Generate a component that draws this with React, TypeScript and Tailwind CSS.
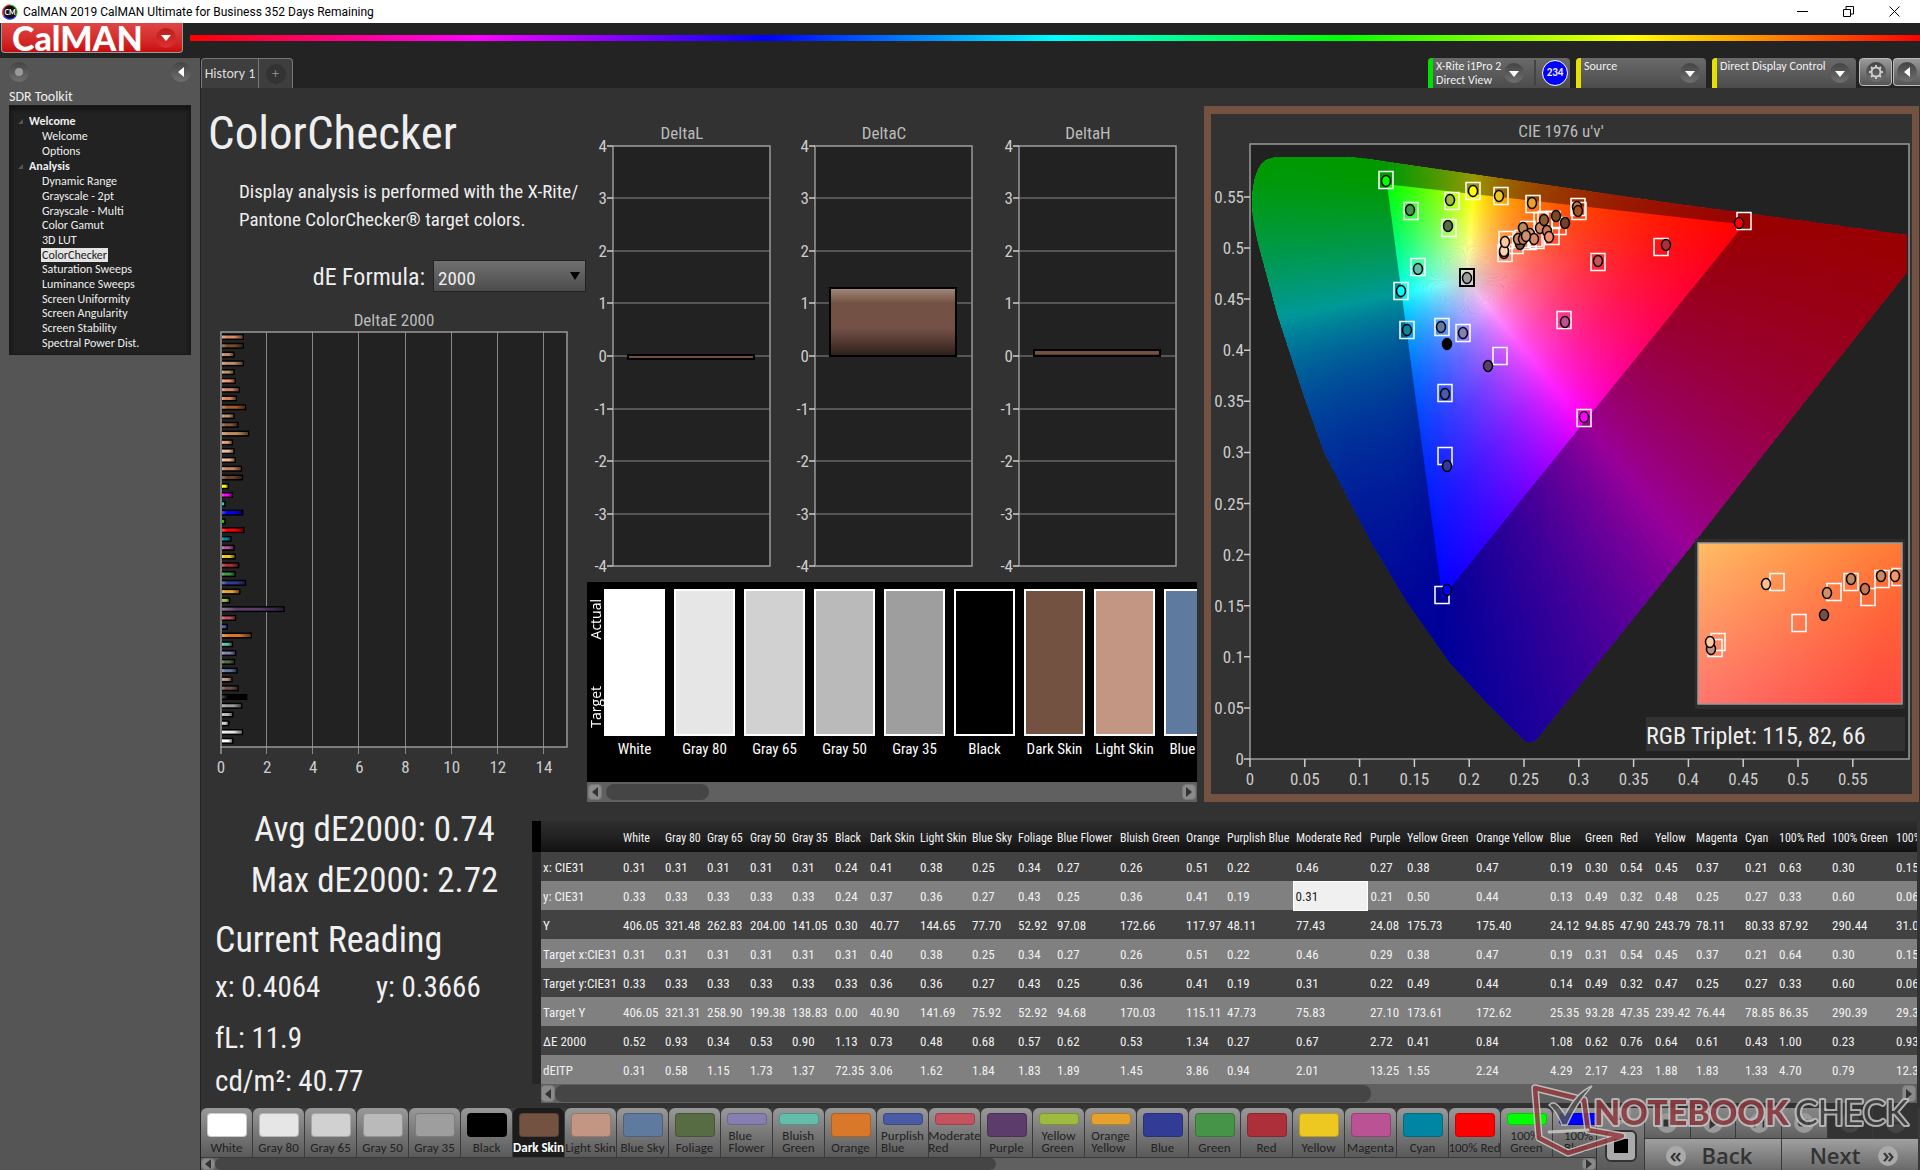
import type { ReactNode } from "react";

const COND = "font-['Roboto_Condensed','Roboto',sans-serif]";
const HUMAN = "font-['Carlito','Lato',sans-serif]";

const menu = [
  { title: "Welcome", items: ["Welcome", "Options"] },
  {
    title: "Analysis",
    items: [
      "Dynamic Range", "Grayscale - 2pt", "Grayscale - Multi", "Color Gamut", "3D LUT", "ColorChecker",
      "Saturation Sweeps", "Luminance Sweeps", "Screen Uniformity", "Screen Angularity", "Screen Stability", "Spectral Power Dist.",
    ],
  },
];

const patches: [string, string][] = [
  ["White", "#ffffff"], ["Gray 80", "#e6e6e6"], ["Gray 65", "#d1d1d1"], ["Gray 50", "#bababa"], ["Gray 35", "#9e9e9e"],
  ["Black", "#000000"], ["Dark Skin", "#735242"], ["Light Skin", "#c29682"], ["Blue Sky", "#5e7a9e"], ["Foliage", "#576c43"],
  ["Blue Flower", "#8580b1"], ["Bluish Green", "#64bdaa"], ["Orange", "#d97829"], ["Purplish Blue", "#4a5ba6"],
  ["Moderate Red", "#c2535f"], ["Purple", "#5c3c6b"], ["Yellow Green", "#9ebb40"], ["Orange Yellow", "#e6a12d"],
  ["Blue", "#323c96"], ["Green", "#469447"], ["Red", "#ad2f39"], ["Yellow", "#edc820"], ["Magenta", "#ba5293"],
  ["Cyan", "#0085a3"], ["100% Red", "#ff0000"], ["100% Green", "#00ff00"], ["100% Blue", "#0000ff"],
];

// one per patch column of the results table
const colWidths = [42, 42, 43, 42, 43, 35, 50, 52, 46, 39, 63, 66, 41, 69, 74, 37, 69, 74, 35, 35, 35, 41, 49, 34, 53, 64, 60];

const rows: [string, string][] = [
  ["x: CIE31", "0.31 0.31 0.31 0.31 0.31 0.24 0.41 0.38 0.25 0.34 0.27 0.26 0.51 0.22 0.46 0.27 0.38 0.47 0.19 0.30 0.54 0.45 0.37 0.21 0.63 0.30 0.15"],
  ["y: CIE31", "0.33 0.33 0.33 0.33 0.33 0.24 0.37 0.36 0.27 0.43 0.25 0.36 0.41 0.19 0.31 0.21 0.50 0.44 0.13 0.49 0.32 0.48 0.25 0.27 0.33 0.60 0.06"],
  ["Y", "406.05 321.48 262.83 204.00 141.05 0.30 40.77 144.65 77.70 52.92 97.08 172.66 117.97 48.11 77.43 24.08 175.73 175.40 24.12 94.85 47.90 243.79 78.11 80.33 87.92 290.44 31.04"],
  ["Target x:CIE31", "0.31 0.31 0.31 0.31 0.31 0.31 0.40 0.38 0.25 0.34 0.27 0.26 0.51 0.22 0.46 0.29 0.38 0.47 0.19 0.31 0.54 0.45 0.37 0.21 0.64 0.30 0.15"],
  ["Target y:CIE31", "0.33 0.33 0.33 0.33 0.33 0.33 0.36 0.36 0.27 0.43 0.25 0.36 0.41 0.19 0.31 0.22 0.49 0.44 0.14 0.49 0.32 0.47 0.25 0.27 0.33 0.60 0.06"],
  ["Target Y", "406.05 321.31 258.90 199.38 138.83 0.00 40.90 141.69 75.92 52.92 94.68 170.03 115.11 47.73 75.83 27.10 173.61 172.62 25.35 93.28 47.35 239.42 76.44 78.85 86.35 290.39 29.31"],
  ["ΔE 2000", "0.52 0.93 0.34 0.53 0.90 1.13 0.73 0.48 0.68 0.57 0.62 0.53 1.34 0.27 0.67 2.72 0.41 0.84 1.08 0.62 0.76 0.64 0.61 0.43 1.00 0.23 0.93"],
  ["dEITP", "0.31 0.58 1.15 1.73 1.37 72.35 3.06 1.62 1.84 1.83 1.89 1.45 3.86 0.94 2.01 13.25 1.55 2.24 4.29 2.17 4.23 1.88 1.83 1.33 4.70 0.79 12.31"],
];

// top to bottom: dE value, colour
const deBars: [number, string][] = [
  [0.95, "#d98c62"], [0.95, "#7c4a28"], [0.55, "#c48b68"], [0.95, "#c48b6d"], [0.55, "#c09068"], [0.6, "#f5966c"],
  [0.78, "#cf8763"], [0.65, "#dc8457"], [1.05, "#a85a28"], [0.55, "#c79070"], [0.72, "#8b5a38"], [1.18, "#c08a5c"],
  [0.48, "#e89a72"], [0.55, "#f0b898"], [0.6, "#f2ba90"], [0.87, "#cc8464"], [0.92, "#6c3f28"], [0.3, "#ffff00"],
  [0.48, "#ff00ff"], [0.16, "#20e0e0"], [0.93, "#0000ff"], [0.16, "#10e010"], [0.98, "#ff0000"], [0.42, "#0085a3"],
  [0.55, "#ba5293"], [0.6, "#edc820"], [0.75, "#ad2f39"], [0.6, "#469447"], [1.05, "#323c96"], [0.8, "#e6a12d"],
  [0.36, "#9ebb40"], [2.72, "#5c3c6b"], [0.62, "#c2535f"], [0.26, "#4a5ba6"], [1.3, "#d97829"], [0.48, "#64bdaa"],
  [0.62, "#8580b1"], [0.57, "#576c43"], [0.68, "#5e7a9e"], [0.46, "#c29682"], [0.73, "#735242"], [1.1, "#000000"],
  [0.88, "#9e9e9e"], [0.5, "#bababa"], [0.32, "#d1d1d1"], [0.92, "#e6e6e6"], [0.5, "#ffffff"],
];

// ---- CIE u'v' chart geometry, in plot pixels ----
const PW = 659;
const PH = 615;
const toX = (u: number) => u * 1096;
const toY = (v: number) => PH - v * 1022;
const WHITE = { u: 0.1978, v: 0.4683 };
const TRI = [[0.1250, 0.5625], [0.4507, 0.5229], [0.1754, 0.1579]];
const LOCUS =
  "M2 62C2 46 4 32 10 22C15 14 24 13 35 13H88C105 13 120 15 138 18L420 59L657 91V128L556 256L446 396L286 596Q279 601 273 595L237 559L200 519L157 458L121 398L74 308L54 252L27 169L10 106Q3 80 2 62Z";

function uvToRgb(u: number, v: number) {
  const d = 6 * u - 16 * v + 12;
  const x = (9 * u) / d;
  const y = Math.max(0.01, (4 * v) / d);
  const X = x / y;
  const Z = (1 - x - y) / y;
  const lin = [
    3.2406 * X - 1.5372 - 0.4986 * Z,
    -0.9689 * X + 1.8758 + 0.0415 * Z,
    0.0557 * X - 0.204 + 1.057 * Z,
  ].map((c) => Math.max(0, c));
  const m = Math.max(...lin);
  return `rgb(${lin.map((c) => Math.round((255 * c) / m)).join(",")})`;
}

// distance from the white point to the gamut triangle along angle a (in uv)
function edgeDistance(a: number) {
  let best = 1;
  for (let i = 0; i < 3; i++) {
    const [x1, y1] = TRI[i];
    const [x2, y2] = TRI[(i + 1) % 3];
    const ex = x2 - x1, ey = y2 - y1;
    const dx = Math.cos(a), dy = Math.sin(a);
    const det = dx * ey - dy * ex;
    const t = ((x1 - WHITE.u) * ey - (y1 - WHITE.v) * ex) / det;
    const s = ((x1 - WHITE.u) * dy - (y1 - WHITE.v) * dx) / det;
    if (t > 0 && s >= -0.001 && s <= 1.001) best = Math.min(best, t);
  }
  return best;
}

const WEDGES = 240;
const wedges = Array.from({ length: WEDGES }, (_, i) => {
  const step = (2 * Math.PI) / WEDGES;
  const a = (i + 0.5) * step;
  const r = edgeDistance(a);
  const cos = Math.cos(a), sin = Math.sin(a);
  // stay inside the positive quadrant of the diagram
  const far = Math.max(r * 1.02, Math.min(r * 3, cos < 0 ? (WHITE.u - 0.001) / -cos : 9, sin < 0 ? (WHITE.v - 0.015) / -sin : 9, sin > 0 ? 0.125 / sin : 9));
  const at = (ang: number, len: number) => `${toX(WHITE.u + Math.cos(ang) * len).toFixed(1)} ${toY(WHITE.v + Math.sin(ang) * len).toFixed(1)}`;
  const lens = [0, 0.1, 0.25, 0.45, 0.7, 1].map((t) => t * r).concat([(r + far) / 2, far]);
  return {
    id: `w${i}`,
    path: `M${at(a, 0)}L${at(i * step - 0.004, 0.9)}L${at((i + 1) * step + 0.012, 0.9)}Z`,
    x2: toX(WHITE.u + cos * far),
    y2: toY(WHITE.v + sin * far),
    stops: lens.map((l) => [l / far, uvToRgb(WHITE.u + cos * l, WHITE.v + sin * l)] as const),
  };
});

const targets = [
  [136, 36], [161, 67], [202, 57], [223, 47], [251, 52], [283, 60], [329, 67], [328, 63], [199, 84], [168, 123], [151, 147],
  [157, 186], [192, 183], [213, 189], [250, 212], [195, 249], [314, 176], [348, 118], [411, 103], [494, 77],
  [334, 274], [195, 312], [192, 451], [256, 96], [255, 109], [266, 101], [272, 95], [278, 86], [285, 94], [291, 77], [302, 92],
  [295, 76], [309, 82], [303, 76], [279, 97], [287, 96],
];

const readings: [number, number, string][] = [
  [136, 37, "#00ff00"], [160, 66, "#469447"], [200, 56, "#9ebb40"], [223, 47, "#ffff00"], [249, 52, "#edc820"],
  [282, 59, "#e6a12d"], [327, 63, "#d97829"], [328, 67, "#a0521f"], [198, 82, "#576c43"], [168, 125, "#64bdaa"],
  [151, 147, "#00ffff"], [157, 186, "#0885a1"], [191, 183, "#5e7a9e"], [213, 189, "#8580b1"],
  [197, 200, "#000000"], [238, 222, "#5c3c6b"], [195, 250, "#4a5ba6"], [315, 178, "#ba5293"], [348, 117, "#c2535f"],
  [416, 101, "#ad2f39"], [489, 79, "#ff0000"], [334, 273, "#ff00ff"], [197, 322, "#323c96"], [197, 446, "#0000ff"],
  [254, 109, "#c29682"], [254, 107, "#ffd0b0"], [255, 98, "#fcc8a0"], [270, 100, "#735242"], [268, 95, "#c08a68"], [273, 95, "#c87850"],
  [280, 90, "#e09070"], [284, 95, "#d08a68"], [273, 84, "#b88a60"], [276, 92, "#d09070"], [290, 84, "#d08860"],
  [297, 87, "#c87850"], [299, 93, "#f09070"], [294, 76, "#905830"], [306, 72, "#7a4a28"], [315, 79, "#704028"],
];

const insetTargets = [[527, 438], [584, 448], [601, 438], [618, 453], [632, 435], [649, 433], [549, 479], [468, 498], [465, 504]];
const insetReadings: [number, number, string][] = [
  [516, 440, "#fcc090"], [577, 449, "#d09068"], [601, 435, "#c08a60"], [615, 445, "#c87850"], [631, 432, "#c88a60"],
  [645, 432, "#f09868"], [574, 471, "#735242"], [461, 505, "#c29682"], [460, 498, "#fcc8a0"],
];

function Round({ children, className = "" }: { children?: ReactNode; className?: string }) {
  return (
    <span className={`flex h-5 w-5 shrink-0 items-center justify-center rounded-full bg-linear-to-b from-[#444] to-[#707070] ${className}`}>{children}</span>
  );
}

function Caret({ dir = "down", className = "h-2 w-2.5 fill-white" }: { dir?: "down" | "left" | "right"; className?: string }) {
  const d = { down: "M0 0H10L5 8Z", left: "M8 0V8L2 4Z", right: "M2 0V8L8 4Z" }[dir];
  return (
    <svg viewBox="0 0 10 8" className={className} preserveAspectRatio="none" aria-hidden="true">
      <path d={d} />
    </svg>
  );
}

function ScrollArrow({ dir, label }: { dir: "left" | "right"; label: string }) {
  return (
    <button aria-label={label} className="flex w-3.5 shrink-0 items-center justify-center self-stretch rounded-sm border border-[#777] bg-[#8a8a8a]">
      <Caret dir={dir} className="h-2.5 w-2.5 fill-[#333]" />
    </button>
  );
}

function TitleBar() {
  return (
    <div className="flex h-[23px] items-center bg-white pl-0.5 text-black">
      <svg viewBox="0 0 16 16" className="h-4 w-4" aria-hidden="true">
        <circle cx="8" cy="8" r="7.6" fill="#3c3" />
        <path d="M8 8L1 12A8 8 0 0 1 8 .4Z" fill="#e33" />
        <path d="M8 8L1 12A8 8 0 0 0 14.500 12Z" fill="#33e" />
        <circle cx="8" cy="8" r="6.500" fill="#111" />
        <text x="8" y="10.500" textAnchor="middle" fontSize="7" fontWeight="bold" fill="#fff" fontFamily="Lato, sans-serif">CM</text>
      </svg>
      <span className="ml-[5px] flex-1 font-['Roboto',sans-serif] text-[12px] leading-none">CalMAN 2019 CalMAN Ultimate for Business 352 Days Remaining</span>
      <div className="flex gap-[35px] pr-5">
        <button aria-label="Minimize"><svg viewBox="0 0 11 11" className="h-[11px] w-[11px] stroke-black"><path d="M0 5.500H11" /></svg></button>
        <button aria-label="Restore"><svg viewBox="0 0 11 11" className="h-[11px] w-[11px] fill-none stroke-black"><path d="M.5 3.500H7.500V10.500H.5ZM3 3.500V.5H10.500V8H7.500" /></svg></button>
        <button aria-label="Close"><svg viewBox="0 0 11 11" className="h-[11px] w-[11px] stroke-black"><path d="M.5 .5L10.500 10.500M10.500 .5L.5 10.500" /></svg></button>
      </div>
    </div>
  );
}

function Brand() {
  return (
    <div className="flex h-[35px] items-start bg-[#232323]">
      <button className="ml-px flex h-[30px] w-[182px] shrink-0 items-center justify-between rounded-b border border-t-0 border-[#999] bg-linear-to-b from-[#e04545] to-[#c90a0c] pr-1.5 pl-2.5">
        <span className="font-['Lato',sans-serif] text-[34px] leading-none font-black text-white">CalMAN</span>
        <span className="flex h-5 w-5 items-center justify-center rounded-full bg-linear-to-b from-[#b81d1d] to-[#e03030]">
          <Caret className="h-1.5 w-2.5 fill-white" />
        </span>
      </button>
      <div className="mt-3 ml-[7px] h-1.5 flex-1 bg-[linear-gradient(to_right,#f00,#f0f,#00f,#0ff,#0f0,#ff0,#f00)]" />
    </div>
  );
}

function Sidebar() {
  return (
    <nav className={`w-[200px] shrink-0 bg-[#555] px-[9px] text-[#eee] ${HUMAN}`}>
      <div className="mt-1 flex justify-between">
        <Round><span className="h-2 w-2 rounded-full bg-[#999]" /></Round>
        <button aria-label="Collapse"><Round><Caret dir="left" className="h-2.5 w-2.5 fill-white" /></Round></button>
      </div>
      <h2 className="mt-1.5 text-[14px] leading-[17px]">SDR Toolkit</h2>
      <div className="border border-[#1a1a1a] bg-[#222] pt-2 pb-1 text-[12px] leading-[15px] shadow-[inset_0_3px_5px_#111]">
        {menu.map((g) => (
          <div key={g.title}>
            <h3 className="flex items-center font-bold">
              <svg viewBox="0 0 5 5" className="mr-[6px] ml-2 h-[5px] w-[5px]" aria-hidden="true"><path d="M5 0V5H0Z" fill="#555" /></svg>
              {g.title}
            </h3>
            <ul className="pl-8">
              {g.items.map((it) => (
                <li key={it} className="h-[15px] nth-[3n]:h-3.5">
                  <a href="#" className={it === "ColorChecker" ? "-ml-px bg-[#e4e4e4] px-px text-[#222]" : ""}>{it}</a>
                </li>
              ))}
            </ul>
          </div>
        ))}
      </div>
    </nav>
  );
}

function DeviceTab({ color, lines, width, children }: { color: string; lines: string[]; width: string; children?: ReactNode }) {
  return (
    <div className={`flex h-[30px] rounded-t bg-linear-to-b from-[#6a6a6a] to-[#4c4c4c] text-[#f0f0f0] ${width}`}>
      <span className="w-[5px] shrink-0 rounded-tl" style={{ backgroundColor: color }} />
      <div className="ml-[3px] flex-1 pt-px text-[12px] leading-[14px] whitespace-nowrap">
        {lines.map((l) => <p key={l}>{l}</p>)}
      </div>
      <button aria-label={`${lines[0]} menu`} className="mr-1.5"><Round><Caret className="mt-0.5 h-1.5 w-2.5 fill-white" /></Round></button>
      {children}
    </div>
  );
}

function TopTabs() {
  return (
    <div className={`flex h-[30px] items-end justify-between bg-[#232323] ${HUMAN}`}>
      <div className="flex h-[30px] text-[14px] text-[#ddd]">
        <button className="w-[58px] rounded-tl border border-b-0 border-[#777] bg-[#3e3e3e]">History 1</button>
        <button aria-label="Add history" className="flex w-[34px] items-center justify-center rounded-tr border border-b-0 border-l-0 border-[#777] bg-[#3e3e3e]">
          <span className="flex h-5 w-5 items-center justify-center rounded-full bg-[#333] text-[#888]">+</span>
        </button>
      </div>
      <div className="flex gap-1.5">
        <DeviceTab color="#00e000" lines={["X-Rite i1Pro 2", "Direct View"]} width="w-[142px]">
          <span className="my-0.5 ml-1 w-0.5 bg-[#444]" />
          <span className="m-[2px] ml-1.5 flex h-[26px] w-[26px] items-center justify-center self-center rounded-full border border-white bg-[#0000ff] text-[11px] font-bold">234</span>
        </DeviceTab>
        <DeviceTab color="#e6e000" lines={["Source"]} width="w-[130px]" />
        <DeviceTab color="#e6e000" lines={["Direct Display Control"]} width="w-[144px]" />
        <div className="-ml-[3px] flex gap-px">
          <button aria-label="Settings" className="flex h-7 w-[33px] items-center justify-center rounded border border-[#bbb] bg-linear-to-b from-[#999] to-[#555]">
            <Round>
              <svg viewBox="0 0 16 16" className="h-4 w-4 fill-none stroke-[#ccc]" strokeWidth="2">
                <circle cx="8" cy="8" r="4.500" />
                <path d="M8 1V3.500M8 12.500V15M1 8H3.500M12.500 8H15M3 3L4.800 4.800M11.200 11.200L13 13M13 3L11.200 4.800M4.800 11.200L3 13" />
              </svg>
            </Round>
          </button>
          <button aria-label="Expand" className="flex h-7 w-[27px] items-center justify-center rounded-l border border-r-0 border-[#bbb] bg-linear-to-b from-[#999] to-[#555]">
            <Round><Caret dir="left" className="h-2.5 w-2.5 fill-white" /></Round>
          </button>
        </div>
      </div>
    </div>
  );
}

function DeltaEChart() {
  const unit = 346 / 15;
  return (
    <svg viewBox="0 0 386 480" className="mt-3.5 block w-full" role="img" aria-label="DeltaE 2000">
      <defs>
        <linearGradient id="shade">
          <stop offset="0" stopColor="#fff" stopOpacity=".3" />
          <stop offset=".25" stopColor="#fff" stopOpacity="0" />
          <stop offset=".6" stopOpacity="0" />
          <stop offset="1" stopOpacity=".55" />
        </linearGradient>
      </defs>
      <text x="193" y="20" textAnchor="middle" fontSize="17" fill="#bbb">DeltaE 2000</text>
      <rect x="20" y="26" width="346" height="415" fill="#222" />
      {[2, 4, 6, 8, 10, 12, 14].map((n) => (
        <path key={n} d={`M${Math.round(19 + n * unit) + 0.5} 26V448`} stroke="#888" />
      ))}
      {deBars.map(([v, c], i) => {
        const y = 28 + i * 8.78;
        return (
          <g key={i}>
            <rect x="20" y={y} width={v * unit + 1} height="6" fill="#000" />
            <rect x="21" y={y + 1.500} width={v * unit - 1.500} height="3" fill={c} />
            <rect x="21" y={y + 1.500} width={v * unit - 1.500} height="3" fill="url(#shade)" />
          </g>
        );
      })}
      <rect x="20" y="26" width="346" height="415" fill="none" stroke="#999" strokeWidth="1.500" />
      <path d="M20 441V448" stroke="#ccc" />
      {[0, 2, 4, 6, 8, 10, 12, 14].map((n) => (
        <text key={n} x={20 + n * unit} y="467" textAnchor="middle" fontSize="17" fill="#ccc">{n}</text>
      ))}
    </svg>
  );
}

function DeltaCharts() {
  const charts = [
    { name: "DeltaL", x: 26, top: 0.02, bottom: -0.06 },
    { name: "DeltaC", x: 228, top: 1.3, bottom: 0 },
    { name: "DeltaH", x: 432, top: 0.11, bottom: 0 },
  ];
  const y = (v: number) => Math.round(268 - v * 52.6);
  return (
    <svg viewBox="0 0 610 494" className="block w-full" role="img" aria-label="DeltaL, DeltaC and DeltaH">
      <defs>
        <linearGradient id="skin" x2="0" y2="1">
          <stop offset="0" stopColor="#a58a80" />
          <stop offset=".22" stopColor="#735242" />
          <stop offset=".6" stopColor="#735046" />
          <stop offset="1" stopColor="#2c1e19" />
        </linearGradient>
      </defs>
      {charts.map((c) => (
        <g key={c.name}>
          <text x={c.x + 69} y="51" textAnchor="middle" fontSize="17" fill="#bbb">{c.name}</text>
          <rect x={c.x} y={y(4)} width="157" height={y(-4) - y(4)} fill="#222" stroke="#999" strokeWidth="1.500" />
          {[4, 3, 2, 1, 0, -1, -2, -3, -4].map((n) => (
            <g key={n}>
              <path d={`M${c.x - 6} ${y(n)}H${c.x}`} stroke="#ccc" strokeWidth="1.500" />
              <path d={`M${c.x} ${y(n)}H${c.x + 157}`} stroke="#888" />
              <text x={c.x - 6} y={y(n) + 6} textAnchor="end" fontSize="17" fill="#ccc">{n}</text>
            </g>
          ))}
          <rect x={c.x + 15} y={y(c.top)} width="126" height={Math.max(3, y(c.bottom) - y(c.top))} fill="url(#skin)" stroke="#000" strokeWidth="2" />
        </g>
      ))}
    </svg>
  );
}

function Swatches() {
  return (
    <div className="bg-black">
      <div className="flex h-[200px] overflow-hidden pt-[7px] text-white">
        <div className="flex w-[17px] shrink-0 flex-col justify-between pt-2.5 pb-[54px] font-['Open_Sans',sans-serif] text-[14px] leading-[16px]">
          <span className="rotate-180 self-center [writing-mode:vertical-rl]">Actual</span>
          <span className="rotate-180 self-center [writing-mode:vertical-rl]">Target</span>
        </div>
        {patches.slice(0, 9).map(([name, c]) => (
          <div key={name} className="mr-[9px] w-[61px] shrink-0 text-center text-[15px] whitespace-nowrap">
            <div className="h-[147px] border-2 border-white" style={{ backgroundColor: c }} />
            <p className="mt-1 leading-[18px]">{name}</p>
          </div>
        ))}
      </div>
      <div className="flex h-5 bg-[#606060] px-px py-0.5">
        <ScrollArrow dir="left" label="Scroll swatches left" />
        <div className="ml-1 w-[103px] rounded-lg bg-[#454545]" />
        <div className="flex-1" />
        <ScrollArrow dir="right" label="Scroll swatches right" />
      </div>
    </div>
  );
}

function Marks({ squares, dots }: { squares: number[][]; dots: [number, number, string][] }) {
  return (
    <>
      {squares.map(([x, y], i) => (
        <rect key={i} x={x - 7} y={y - 8.500} width="14" height="17" fill="none" stroke="#fff" strokeWidth="1.500" />
      ))}
      {dots.map(([x, y, c], i) => (
        <ellipse key={i} cx={x} cy={y} rx="4.500" ry="5.500" fill={c} stroke="#000" strokeWidth="1.500" />
      ))}
    </>
  );
}

function CieChart() {
  const ticks = [0, 0.05, 0.1, 0.15, 0.2, 0.25, 0.3, 0.35, 0.4, 0.45, 0.5, 0.55];
  const tri = TRI.map(([u, v]) => `${toX(u)} ${toY(v)}`).join("L");
  return (
    <svg viewBox="0 0 701 680" className="block w-full" role="img" aria-label="CIE 1976 u'v' chromaticity">
      <defs>
        <clipPath id="locus"><path d={LOCUS} /></clipPath>
        <clipPath id="inset"><rect x="448" y="399" width="204" height="161" /></clipPath>
        {wedges.map((w) => (
          <linearGradient key={w.id} id={w.id} gradientUnits="userSpaceOnUse" x1={toX(WHITE.u)} y1={toY(WHITE.v)} x2={w.x2} y2={w.y2}>
            {w.stops.map(([t, c]) => <stop key={t} offset={t} stopColor={c} />)}
          </linearGradient>
        ))}
        <linearGradient id="insetBase" x2="1" y2=".25">
          <stop offset="0" stopColor="#ffbe64" />
          <stop offset="1" stopColor="#ff7530" />
        </linearGradient>
        <linearGradient id="insetLow" x2="1" y2=".2">
          <stop offset="0" stopColor="#ff8078" />
          <stop offset="1" stopColor="#ff4a42" />
        </linearGradient>
        <linearGradient id="fade" x2="0" y2="1">
          <stop offset="0" stopColor="#fff" stopOpacity="0" />
          <stop offset="1" stopColor="#fff" />
        </linearGradient>
        <mask id="low"><rect x="448" y="399" width="204" height="161" fill="url(#fade)" /></mask>
      </defs>
      <text x="350" y="23" textAnchor="middle" fontSize="17" fill="#bbb">CIE 1976 u'v'</text>
      <g transform="translate(39 30)">
        <rect width={PW} height={PH} fill="#222" />
        <g clipPath="url(#locus)">
          {wedges.map((w) => <path key={w.id} d={w.path} fill={`url(#${w.id})`} />)}
          <path d={`M0 0H${PW}V${PH}H0ZM${tri}Z`} fillRule="evenodd" fillOpacity=".4" />
        </g>
        <Marks squares={targets} dots={readings} />
        <rect x="210" y="125" width="14" height="17" fill="none" stroke="#000" strokeWidth="2" />
        <ellipse cx="217" cy="134" rx="4.500" ry="5.500" fill="#9e9e9e" stroke="#000" strokeWidth="1.500" />
        <rect x="445" y="395" width="210" height="170" fill="#2d2d2d" />
        <g clipPath="url(#inset)">
          <rect x="448" y="399" width="204" height="161" fill="url(#insetBase)" />
          <rect x="448" y="399" width="204" height="161" fill="url(#insetLow)" mask="url(#low)" />
          <Marks squares={insetTargets} dots={insetReadings} />
        </g>
        <rect x="448" y="399" width="204" height="161" fill="none" stroke="#999" strokeWidth="1.500" />
        <rect x="396" y="573" width="259" height="34" fill="#323232" />
        <text x="396" y="600" fontSize="24" fill="#eee">RGB Triplet: 115, 82, 66</text>
        <rect width={PW} height={PH} fill="none" stroke="#999" strokeWidth="1.500" />
        {ticks.map((t) => (
          <g key={t} fontSize="17" fill="#ccc" stroke="none">
            <path d={`M${toX(t)} ${PH}v8M0 ${toY(t)}h-6`} stroke="#ccc" strokeWidth="1.500" />
            <text x={toX(t)} y="641" textAnchor="middle">{t}</text>
            <text x="-6" y={toY(t) + 6} textAnchor="end">{t}</text>
          </g>
        ))}
      </g>
    </svg>
  );
}

function Summary() {
  return (
    <div className="w-[331px] shrink-0 pt-[3px] text-[#f0f0f0]">
      <div className="pl-4 text-center text-[35px] leading-[50px]">
        <p className="mb-px">Avg dE2000: 0.74</p>
        <p>Max dE2000: 2.72</p>
      </div>
      <div className="mt-[9px] pl-3.5 text-[29px] leading-[44px]">
        <h2 className="text-[36px] leading-[50px]">Current Reading</h2>
        <div className="flex">
          <p className="w-[161px]">x: 0.4064</p>
          <p>y: 0.3666</p>
        </div>
        <p className="mt-[7px]">fL: 11.9</p>
        <p className="leading-[42px]">cd/m²: 40.77</p>
      </div>
    </div>
  );
}

function Results() {
  return (
    <div className="mt-[19px] mr-[3px] min-w-0 flex-1">
      <div className="overflow-hidden">
        <table className="w-[1421px] table-fixed border-collapse text-left text-[13px] text-[#f0f0f0]">
          <colgroup>
            <col className="w-[9px]" />
            <col className="w-[79px]" />
            {colWidths.map((w, i) => <col key={i} style={{ width: w }} />)}
          </colgroup>
          <thead>
            <tr className="h-[31px] bg-linear-to-b from-[#2e2e2e] via-[#222] to-[#111] text-[12px] whitespace-nowrap">
              <td className="bg-black" />
              <td />
              {patches.map(([name]) => <th key={name} scope="col" className="p-0 pt-0.5 pl-[3px] font-normal">{name}</th>)}
            </tr>
          </thead>
          <tbody>
            {rows.map(([label, values], r) => (
              <tr key={label} className="h-[29px] bg-[#424242] whitespace-nowrap even:bg-[#808080]">
                <td className="bg-[#262626]" />
                <th scope="row" className="p-0 pt-0.5 pl-0.5 font-normal">{label}</th>
                {values.split(" ").map((v, c) => (
                  <td key={c} className={r === 1 && c === 14 ? "border border-white bg-[#f0f0f0] p-0 pt-0.5 pl-0.5 text-[#222]" : "p-0 pt-0.5 pl-[3px]"}>{v}</td>
                ))}
              </tr>
            ))}
          </tbody>
        </table>
      </div>
      <div className="ml-[9px] flex h-[19px] bg-[#606060] py-px pr-px">
        <ScrollArrow dir="left" label="Scroll table left" />
        <div className="w-[816px] rounded-lg bg-[#454545]" />
        <div className="flex-1" />
        <ScrollArrow dir="right" label="Scroll table right" />
      </div>
    </div>
  );
}

function PatchButton({ name, color }: { name: string; color: string }) {
  const twoLine = name.length > 9;
  const short = twoLine && name !== "Light Skin";
  const active = name === "Dark Skin";
  return (
    <button
      className={`flex h-[49px] w-[51px] shrink-0 flex-col items-center overflow-hidden rounded-t-md pt-[5px] ${active ? "bg-[#1c1c1c] font-bold text-white" : "bg-linear-to-b from-[#999] to-[#5a5a5a] text-[#222]"}`}
    >
      <span className={`w-10 shrink-0 rounded border border-black/20 ${short || name === "100% Blue" ? "h-3" : "h-6"}`} style={{ backgroundColor: color }} />
      <span className={`mt-[5px] text-left leading-[12px] ${short || name === "100% Blue" ? "w-min" : "whitespace-nowrap"}`}>{name}</span>
    </button>
  );
}

const mediaIcons = ["M5 5H11V11H5Z", "M5 3L12 8L5 13Z", "M3 3V13M13 3V13M6 8H10", "M2 8C2 4 8 4 8 8S14 12 14 8S8 4 8 8S2 12 2 8", "M12 5A5 5 0 1 0 13 9", "M3 8H13"];

function BottomBar() {
  return (
    <div className="relative mt-[5px] flex h-[62px] bg-[#3a3a3a]">
      <div className="min-w-0 flex-1">
        <div className={`flex h-[50px] gap-px overflow-hidden text-[13px] ${HUMAN}`}>
          {patches.map(([name, c]) => <PatchButton key={name} name={name} color={c} />)}
        </div>
        <div className="flex h-3 bg-[#606060]">
          <ScrollArrow dir="left" label="Scroll patches left" />
          <div className="w-[781px] rounded-lg bg-[#454545]" />
          <div className="flex-1" />
          <ScrollArrow dir="right" label="Scroll patches right" />
        </div>
      </div>
      <div className="flex w-12 shrink-0 flex-col items-center gap-1.5 border-l border-[#333] bg-linear-to-b from-[#888] to-[#5a5a5a]">
        <button aria-label="Show patterns" className="flex h-4 w-5 items-end justify-center rounded-b-full bg-[#999] text-[10px] leading-[14px] text-[#333]">▲</button>
        <button aria-label="Pattern window" className="flex h-8 w-8 items-center justify-center rounded-md border-2 border-[#333] bg-[#aaa]">
          <span className="h-3.5 w-3.5 bg-black" />
        </button>
      </div>
      <div className="ml-px w-[275px] shrink-0 pr-0.5">
        <div className="grid h-[30px] grid-cols-6 gap-px">
          {mediaIcons.map((d, i) => (
            <button key={i} aria-label={`Transport ${i + 1}`} className={`flex items-center justify-center ${i < 4 ? "bg-linear-to-b from-[#888] to-[#606060]" : "bg-[#333]"}`}>
              <span className={`flex h-5 w-5 items-center justify-center rounded-full ${i < 4 ? "bg-[#999]" : "bg-[#444]"}`}>
                <svg viewBox="0 0 16 16" className={`h-3.5 w-3.5 stroke-[#333] ${i < 2 ? "fill-[#333]" : "fill-none"}`} strokeWidth="2"><path d={d} /></svg>
              </span>
            </button>
          ))}
        </div>
        <div className="mt-px grid h-[29px] grid-cols-2 gap-px font-['Open_Sans',sans-serif] text-[22px] font-semibold text-[#333]">
          <button className="flex items-center justify-center gap-4 bg-linear-to-b from-[#a0a0a0] to-[#666] pr-2">
            <span className="flex h-5 w-5 items-center justify-center rounded-full bg-[#aaa] leading-none"><span className="pb-1">«</span></span>Back
          </button>
          <button className="flex items-center justify-center gap-[18px] bg-linear-to-b from-[#a0a0a0] to-[#666] pl-2">
            Next<span className="flex h-5 w-5 items-center justify-center rounded-full bg-[#aaa] leading-none"><span className="pb-1">»</span></span>
          </button>
        </div>
      </div>
      <Watermark />
    </div>
  );
}

function Watermark() {
  return (
    <svg viewBox="0 0 390 80" className="pointer-events-none absolute -top-[25px] right-0 h-20 w-[390px] opacity-85" role="img" aria-label="Notebookcheck">
      <g fill="none" strokeLinejoin="round" strokeLinecap="round">
        <path d="M5 5L54 17L58 47L92 53L38 70L9 55Z" stroke="#ccc" strokeWidth="7.500" />
        <path d="M5 5L54 17L58 47L92 53L38 70L9 55Z" stroke="#943c40" strokeWidth="4.500" />
        <path d="M19 49L58 47" stroke="#ccc" strokeWidth="3" />
      </g>
      <path d="M19 22C24 17 29 22 35 32C42 18 50 8 62 3C53 13 44 26 37 42H32C29 34 25 27 19 22Z" fill="#555" stroke="#ccc" strokeWidth="1.500" />
      <g fontFamily="Lato, sans-serif" fontSize="34" paintOrder="stroke" stroke="#c4c4c4" strokeLinejoin="round">
        <text x="64" y="42" fontWeight="900" fill="#8c383c" strokeWidth="4">NOTEBOOK</text>
        <text x="378" y="42" textAnchor="end" fill="#3d3d3d" strokeWidth="4">CHECK</text>
      </g>
    </svg>
  );
}

export default function App() {
  return (
    <div className={`flex min-h-screen flex-col overflow-hidden bg-[#323232] ${COND}`}>
      <TitleBar />
      <Brand />
      <div className="flex flex-1">
        <Sidebar />
        <main className="flex min-w-0 flex-1 flex-col border-l border-[#222]">
          <TopTabs />
          <div className="flex">
            <section className="w-[386px] shrink-0 text-[#eee]">
              <h1 className="mt-[15px] ml-[7px] text-[47px] leading-[60px]">ColorChecker</h1>
              <p className="mt-[15px] ml-[38px] text-[19px] leading-[28px] whitespace-nowrap">
                Display analysis is performed with the X-Rite/
                <br />
                Pantone ColorChecker® target colors.
              </p>
              <div className="mt-[26px] mr-px flex h-8 items-center justify-end gap-2">
                <label htmlFor="formula" className="pt-px text-[24px]">dE Formula:</label>
                <div className="relative w-[153px]">
                  <select id="formula" className="block h-8 w-full appearance-none border border-[#222] bg-linear-to-b from-[#707070] to-[#4c4c4c] pt-1 pl-1 text-[19px]">
                    <option>2000</option>
                  </select>
                  <Caret className="pointer-events-none absolute top-3 right-1.5 h-2 w-2.5 fill-black" />
                </div>
              </div>
              <DeltaEChart />
            </section>
            <section className="w-[610px] shrink-0">
              <DeltaCharts />
              <Swatches />
            </section>
            <section className="mt-[18px] mr-px ml-[7px] min-w-0 flex-1 self-start border-x-7 border-y-8 border-[#735242]">
              <CieChart />
            </section>
          </div>
          <div className="flex">
            <Summary />
            <Results />
          </div>
          <BottomBar />
        </main>
      </div>
    </div>
  );
}
